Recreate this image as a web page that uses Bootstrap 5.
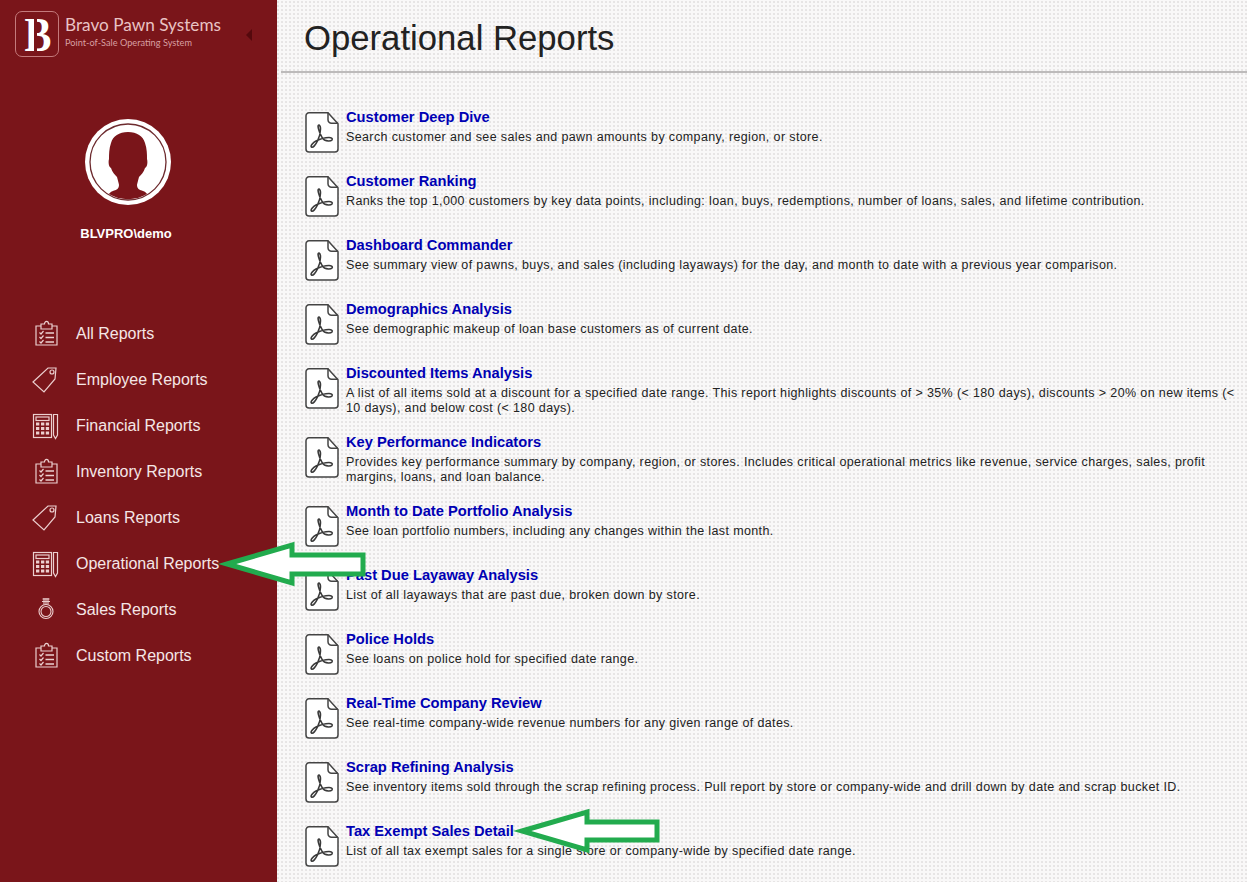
<!doctype html>
<html lang="en">
<head>
<meta charset="utf-8">
<title>Operational Reports</title>
<link href="https://cdn.jsdelivr.net/npm/bootstrap@5.3.0/dist/css/bootstrap.min.css" rel="stylesheet">
<style>
html,body{height:882px;overflow:hidden}
body{font-family:"Liberation Sans",Arial,sans-serif;background-color:#f9f8f8;background-image:radial-gradient(#e6e4e4 .7px,transparent .9px);background-size:4px 4px}
.shell{height:882px;position:relative}
.side{width:277px;flex:none;background:#7a151a;color:#f5e8e8}
.brand{height:72px;padding:11px 0 0 15px;position:relative}
.logo-mark{width:44px;height:46px;flex:none;border:1px solid #c47a7c;border-radius:7px;position:relative;color:#fff;font:700 48px/45px "Liberation Serif",serif;text-align:center;padding-left:3px}
.logo-b{display:inline-block;transform:scaleX(.84)}
.logo-cut{position:absolute;left:18px;top:0;width:3px;height:100%;background:#7a151a}
.brand-name{font:400 17.2px/20px Lato,sans-serif;color:#e9c3c4;margin:4px 0 0 6px;white-space:nowrap}
.brand-sub{font:400 9.2px/10px Lato,sans-serif;color:#d79fa1;margin:3px 0 0 6px;white-space:nowrap}
.collapse-tri{position:absolute;left:246px;top:29px;width:0;height:0;border-style:solid;border-width:6px 6px 6px 0;border-color:transparent #55090d transparent transparent}
.avatar{display:block;margin:47px 0 0 85px;width:86px;height:86px}
.user{font-size:13px;font-weight:700;text-align:center;color:#fff;margin-top:21px;line-height:16px;padding-right:25px}
.side-nav{margin-top:69px}
.side-nav .nav-link{height:46px;padding:0 0 0 32px;color:#f5e6e6;font-size:16px;display:flex;align-items:center;gap:16px}
.side-nav svg{width:28px;height:28px;flex:none;color:#eccfcf}
.page-head{height:73px;border-bottom:2px solid #bdbbbb;margin-left:4px;padding-left:23px}
.page-head h1{font-size:34.7px;font-weight:400;line-height:76px;color:#222;margin:0;height:71px}
.reports{padding:29px 10px 0 28px}
.rep{min-height:64px;padding:10px 0 11px;display:flex;gap:7px}
.pdf{width:34px;height:41px;flex:none;margin-top:0}
.rep a{display:block;font-weight:700;font-size:14.7px;line-height:19px;color:#0000b4;text-decoration:none;margin-top:-4px}
.rep p{margin:0;font-size:12.5px;letter-spacing:.37px;line-height:15px;color:#222;margin-top:3px}
.arrows{position:absolute;left:0;top:0;width:1247px;height:882px;pointer-events:none}
</style>
</head>
<body>
<svg width="0" height="0" class="position-absolute">
<defs>
<symbol id="i-clip" viewBox="0 0 28 28"><g fill="none" stroke="currentColor" stroke-width="1.200"><path d="M9 6H4v19h21V6h-5"/><path d="M9 9V4h3.500c0-3.500 4-3.500 4 0H20v5z"/><path d="M7.500 12.500l1.500 1.500 2.500-3M7.500 17l1.500 1.500 2.500-3M7.500 21.500l1.500 1.500 2.500-3"/><path d="M13.500 13h8.500M13.500 17.500h8.500M13.500 22h8.500" stroke-width="1.500"/></g></symbol>
<symbol id="i-tag" viewBox="0 0 28 28"><g fill="none" stroke="currentColor" stroke-width="1.200"><path d="M1 16L16 2h8l-1 11L12 26z"/><circle cx="20" cy="6" r="2"/></g></symbol>
<symbol id="i-calc" viewBox="0 0 28 28"><g fill="none" stroke="currentColor" stroke-width="1.200"><rect x="1.500" y="2.500" width="18" height="23"/><rect x="4" y="5" width="13" height="3.500"/><path d="M21.500 2.500h4V23l-2 3.500-2-3.500z"/></g><g fill="currentColor"><rect x="4" y="10.500" width="3.300" height="3"/><rect x="9" y="10.500" width="3.300" height="3"/><rect x="13.800" y="10.500" width="3.300" height="3"/><rect x="4" y="15" width="3.300" height="3"/><rect x="9" y="15" width="3.300" height="3"/><rect x="13.800" y="15" width="3.300" height="3"/><rect x="4" y="19.500" width="3.300" height="3"/><rect x="9" y="19.500" width="3.300" height="3"/><rect x="13.800" y="19.500" width="3.300" height="3"/></g></symbol>
<symbol id="i-ring" viewBox="0 0 28 28"><g fill="none" stroke="currentColor" stroke-width="1.100"><circle cx="14" cy="15.500" r="7"/><circle cx="14" cy="15.500" r="5"/><path d="M10.500 3h7M10 5.500h8M12 2v6.500M14 2v6.500M16 2v6.500"/></g></symbol>
<symbol id="i-pdf" viewBox="0 0 34 41"><path d="M4 .8h19l10 11V37a3 3 0 0 1-3 3H4a3 3 0 0 1-3-3V3.800a3 3 0 0 1 3-3z" fill="#fff" stroke="#444" stroke-width="1.500"/><path d="M23 .8v7a3.500 3.500 0 0 0 3.500 3.500h6.500" fill="none" stroke="#444" stroke-width="1.500"/><path d="M14 13c-1.500 0-1 3 .5 7s3.500 7 5 8c2 1 6 1.500 7.500 0 1-1.500-1-2.500-3-2.500-4 0-9 1.500-13 3.500-3 1.500-6 5-4.500 6s4-2 6-6 3-9 3-12c0-2-.5-3.500-1.500-4z" fill="none" stroke="#3a3a3a" stroke-width="1.600" stroke-linejoin="round"/></symbol>
</defs>
</svg>
<div class="shell d-flex">
<aside class="side">
<div class="brand d-flex align-items-start">
<div class="logo-mark"><span class="logo-b">B</span><span class="logo-cut"></span></div>
<div><div class="brand-name">Bravo Pawn Systems</div><div class="brand-sub">Point-of-Sale Operating System</div></div>
<span class="collapse-tri"></span>
</div>
<svg class="avatar" viewBox="0 0 86 86" aria-hidden="true"><circle cx="43" cy="43" r="43" fill="#fff"/><circle cx="43" cy="43" r="38" fill="none" stroke="#6d2a2e" stroke-width="1.300"/><path d="M43 13C34 13 28 17 26 24C24 30 24 35 24 40C23 44 24 48 26 49C27 53 30 56 32 58C33 62 34 65 34 66C34 70 31 71 28 72C26 72.500 25 73.500 24 75A37.500 37.500 0 0 0 62 75C61 73.500 60 72.500 58 72C55 71 52 70 52 66C52 65 53 62 54 58C56 56 59 53 60 49C62 48 63 44 62 40C62 35 62 30 60 24C58 17 52 13 43 13Z" fill="#7a151a"/></svg>
<div class="user">BLVPRO\demo</div>
<nav class="nav flex-column side-nav">
<a class="nav-link" href="#"><svg><use href="#i-clip"/></svg>All Reports</a>
<a class="nav-link" href="#"><svg><use href="#i-tag"/></svg>Employee Reports</a>
<a class="nav-link" href="#"><svg><use href="#i-calc"/></svg>Financial Reports</a>
<a class="nav-link" href="#"><svg><use href="#i-clip"/></svg>Inventory Reports</a>
<a class="nav-link" href="#"><svg><use href="#i-tag"/></svg>Loans Reports</a>
<a class="nav-link" href="#"><svg><use href="#i-calc"/></svg>Operational Reports</a>
<a class="nav-link" href="#"><svg><use href="#i-ring"/></svg>Sales Reports</a>
<a class="nav-link" href="#"><svg><use href="#i-clip"/></svg>Custom Reports</a>
</nav>
</aside>
<main class="flex-grow-1">
<div class="page-head"><h1>Operational Reports</h1></div>
<div class="reports">
<div class="rep"><svg class="pdf"><use href="#i-pdf"/></svg><div><a href="#">Customer Deep Dive</a><p>Search customer and see sales and pawn amounts by company, region, or store.</p></div></div>
<div class="rep"><svg class="pdf"><use href="#i-pdf"/></svg><div><a href="#">Customer Ranking</a><p>Ranks the top 1,000 customers by key data points, including: loan, buys, redemptions, number of loans, sales, and lifetime contribution.</p></div></div>
<div class="rep"><svg class="pdf"><use href="#i-pdf"/></svg><div><a href="#">Dashboard Commander</a><p>See summary view of pawns, buys, and sales (including layaways) for the day, and month to date with a previous year comparison.</p></div></div>
<div class="rep"><svg class="pdf"><use href="#i-pdf"/></svg><div><a href="#">Demographics Analysis</a><p>See demographic makeup of loan base customers as of current date.</p></div></div>
<div class="rep"><svg class="pdf"><use href="#i-pdf"/></svg><div><a href="#">Discounted Items Analysis</a><p>A list of all items sold at a discount for a specified date range. This report highlights discounts of &gt; 35% (&lt; 180 days), discounts &gt; 20% on new items (&lt; 10 days), and below cost (&lt; 180 days).</p></div></div>
<div class="rep"><svg class="pdf"><use href="#i-pdf"/></svg><div><a href="#">Key Performance Indicators</a><p>Provides key performance summary by company, region, or stores. Includes critical operational metrics like revenue, service charges, sales, profit margins, loans, and loan balance.</p></div></div>
<div class="rep"><svg class="pdf"><use href="#i-pdf"/></svg><div><a href="#">Month to Date Portfolio Analysis</a><p>See loan portfolio numbers, including any changes within the last month.</p></div></div>
<div class="rep"><svg class="pdf"><use href="#i-pdf"/></svg><div><a href="#">Past Due Layaway Analysis</a><p>List of all layaways that are past due, broken down by store.</p></div></div>
<div class="rep"><svg class="pdf"><use href="#i-pdf"/></svg><div><a href="#">Police Holds</a><p>See loans on police hold for specified date range.</p></div></div>
<div class="rep"><svg class="pdf"><use href="#i-pdf"/></svg><div><a href="#">Real-Time Company Review</a><p>See real-time company-wide revenue numbers for any given range of dates.</p></div></div>
<div class="rep"><svg class="pdf"><use href="#i-pdf"/></svg><div><a href="#">Scrap Refining Analysis</a><p>See inventory items sold through the scrap refining process. Pull report by store or company-wide and drill down by date and scrap bucket ID.</p></div></div>
<div class="rep"><svg class="pdf"><use href="#i-pdf"/></svg><div><a href="#">Tax Exempt Sales Detail</a><p>List of all tax exempt sales for a single store or company-wide by specified date range.</p></div></div>
</div>
</main>
<svg class="arrows" viewBox="0 0 1247 882" aria-hidden="true"><g fill="#fff" stroke="#22ab4e" stroke-width="5" stroke-linejoin="miter"><polygon points="227,564 292,545 292,555 363,555 363,574 292,574 292,583"/><polygon points="522,831 587,812 587,822 657,822 657,840 587,840 587,850"/></g></svg>
</div>
<script src="https://cdn.jsdelivr.net/npm/bootstrap@5.3.0/dist/js/bootstrap.bundle.min.js"></script>
</body>
</html>
